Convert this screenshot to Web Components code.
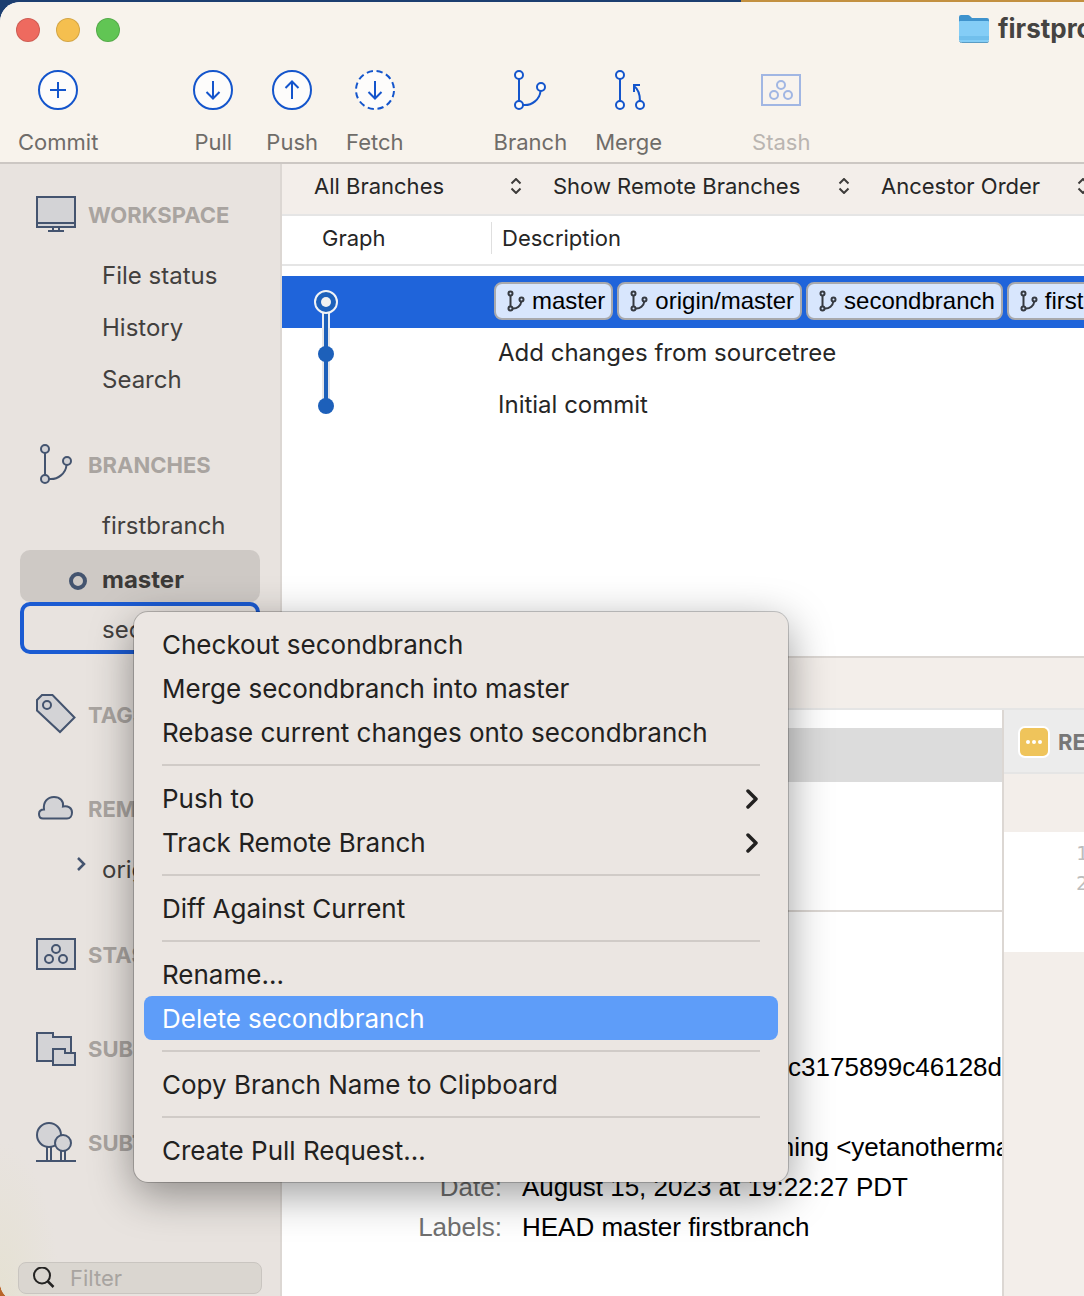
<!DOCTYPE html>
<html lang="en">
<head>
<meta charset="utf-8">
<meta name="viewport" content="width=device-width, initial-scale=1">
<title>firstproject</title>
<style>
  :root {
    --blue: #1455cc;
    --select: #1f64da;
    --slate: #44546f;
    --slate-fill: #d3d3d6;
    --bar: #f3eeea;
    --line: #dcd7d3;
    --line-soft: #e5e5e5;
    --ui: Inter, "Open Sans", sans-serif;
    --plain: "Liberation Sans", Arial, sans-serif;
  }
  html, body { height: 100%; }
  body {
    margin: 0;
    overflow: hidden;
    font-family: var(--ui);
    font-size: 22px;
    color: #262626;
    background:
      linear-gradient(to right, #1c3e70 0 68.4%, #c39040 68.4% 100%) top / 100% 40px no-repeat,
      #b9652a;
  }
</style>
</head>
<body>
<app-window></app-window>

<script>
const define = (name, html, setup) => {
  const template = document.createElement('template');
  template.innerHTML = '<style>*{box-sizing:border-box}:host{display:block;box-sizing:border-box}button,input,select{font:inherit;color:inherit;margin:0;border:0;background:none;padding:0}</style>' + html;
  customElements.define(name, class extends HTMLElement {
    constructor() {
      super();
      this.attachShadow({ mode: 'open' }).append(template.content.cloneNode(true));
    }
    connectedCallback() { if (setup) setup(this, this.shadowRoot); }
  });
};

/* ---------- icons ---------- */
const trio = '<rect x="1" y="5" width="38" height="30"/><circle cx="20" cy="15" r="4"/><circle cx="13" cy="25" r="4"/><circle cx="27" cy="25" r="4"/>';
const fork = '<path fill="none" d="M9 9V31M13 35C22 36 30 29 30.500 21"/><circle cx="9" cy="5" r="4"/><circle cx="9" cy="35" r="4"/><circle cx="31" cy="17" r="4"/>';
const ICONS = {
  commit: '<circle cx="20" cy="20" r="19"/><path d="M20 12V28M12 20H28"/>',
  pull: '<circle cx="20" cy="20" r="19"/><path fill="none" d="M20 11V28M13.500 22L20 28.500L26.500 22"/>',
  push: '<circle cx="20" cy="20" r="19"/><path fill="none" d="M20 29V12M13.500 18L20 11.500L26.500 18"/>',
  fetch: '<circle cx="20" cy="20" r="19" stroke-dasharray="6.200 3.750" stroke-dashoffset="-1"/><path fill="none" d="M20 11V28M13.500 22L20 28.500L26.500 22"/>',
  branch: fork,
  merge: '<path fill="none" d="M11 9V31M31 31C31 24 29 19 25 16M25 22V15H31"/><circle cx="11" cy="5" r="4"/><circle cx="11" cy="35" r="4"/><circle cx="31" cy="35" r="4"/>',
  stash: trio,
  monitor: '<rect x="1" y="3" width="38" height="30"/><path d="M1 29H39M17 34V36M23 34V36M12 37H28"/>',
  tag: '<path d="M1 6L6 1H16.500L38.500 23.500L24 38L1 16.500Z"/><circle cx="11" cy="11" r="4"/>',
  cloud: '<path d="M7 30.500H31C34 30.500 36 28 36 24.500C36 20 32 17.500 27 18.500C28 13 24 9 18 9C11.500 9 7 14 8 21.500C4.500 21.500 3 23.500 3 26C3 29 4.500 30.500 7 30.500Z"/>',
  modules: '<path d="M1 5H17V9H35V33H1Z"/><path d="M17 21H29V25H39V37H17Z"/>',
  trees: '<circle cx="13" cy="13" r="12"/><path d="M11 25V39M15 25V39"/><circle cx="27" cy="21" r="8"/><path d="M25 29V39M29 29V39M0 39H40"/>'
};
define('st-icon', `
<style>
  :host { width: 40px; height: 40px; flex: none; }
  svg { display: block; width: 100%; height: 100%; overflow: visible; stroke: var(--icon-stroke, #1455cc); fill: var(--icon-fill, #fdfcfb); stroke-width: var(--icon-width, 2); }
</style>
<svg viewBox="0 0 40 40" aria-hidden="true"></svg>`,
(host, root) => { root.querySelector('svg').innerHTML = ICONS[host.getAttribute('name')]; });

/* ---------- title bar ---------- */
define('traffic-lights', `
<style>
  :host { display: flex; gap: 16px; }
  button { width: 24px; height: 24px; border-radius: 50%; border: 1px solid #0002; }
  .close { background: #ee6a5f; } .min { background: #f5bf4f; } .zoom { background: #61c554; }
</style>
<button class="close" aria-label="Close"></button><button class="min" aria-label="Minimize"></button><button class="zoom" aria-label="Zoom"></button>`);

define('window-title', `
<style>
  :host { display: flex; align-items: center; gap: 8px; font-size: 26px; line-height: 32px; font-weight: 700; color: #454341; white-space: nowrap; }
  svg { flex: none; width: 32px; height: 32px; }
</style>
<svg viewBox="0 0 32 32" aria-hidden="true">
  <path d="M1 4q0-2 2-2h7q1 0 2 1l2 2h15q2 0 2 2v6H1z" fill="#3f93cd"/>
  <path d="M1 9q0-1 1-1h28q1 0 1 1v18q0 2-2 2H3q-2 0-2-2z" fill="#84cdf6"/>
  <path d="M1 24H31M1 26H31" stroke="#5fb2e2"/>
  <path d="M1.500 28.500Q2 29.500 3.500 29.500H29Q30.500 29.500 30.500 28.500" stroke="#5a9cc4" fill="none"/>
</svg>
<slot></slot>`);

/* ---------- tool bar ---------- */
define('tool-button', `
<style>
  button { display: flex; flex-direction: column; align-items: center; gap: 18px; min-width: 50px; line-height: 28px; color: #6f6c69; }
  :host([disabled]) button { color: #bab5b1; }
  :host([disabled]) { --icon-stroke: #a1b6e3; --icon-fill: #f8f3ee; }
</style>
<button type="button"><span class="icon"></span><slot></slot></button>`,
(host, root) => {
  root.querySelector('.icon').innerHTML = '<st-icon name="' + host.getAttribute('icon') + '"></st-icon>';
  root.querySelector('button').disabled = host.hasAttribute('disabled');
});

define('window-header', `
<style>
  :host { background: #f8f3ec; border-bottom: 2px solid #ccc7c3; }
  .title { display: flex; align-items: center; height: 56px; padding-left: 16px; overflow: hidden; }
  window-title { margin-left: 838px; padding-bottom: 2px; }
  .tools { display: flex; gap: 90px; padding: 12px 18px 6px; }
  .group { display: flex; gap: 28px; }
</style>
<div class="title"><traffic-lights></traffic-lights><window-title>firstproject</window-title></div>
<div class="tools" role="toolbar" aria-label="Repository actions">
  <tool-button icon="commit">Commit</tool-button>
  <div class="group">
    <tool-button icon="pull">Pull</tool-button>
    <tool-button icon="push">Push</tool-button>
    <tool-button icon="fetch">Fetch</tool-button>
  </div>
  <div class="group">
    <tool-button icon="branch">Branch</tool-button>
    <tool-button icon="merge">Merge</tool-button>
  </div>
  <tool-button icon="stash" disabled>Stash</tool-button>
</div>`);

/* ---------- side bar ---------- */
define('side-section', `
<style>
  :host { --icon-stroke: var(--slate); --icon-fill: var(--slate-fill); }
  h2 { display: flex; align-items: center; gap: 12px; height: 64px; margin: 0; padding: 0 0 2px 36px; font-size: 22px; font-weight: 700; color: #a9a4a0; white-space: nowrap; }
  .icon { margin-bottom: 2px; }
</style>
<h2><span class="icon"></span><slot name="title"></slot></h2>
<slot></slot>`,
(host, root) => { root.querySelector('.icon').innerHTML = '<st-icon name="' + host.getAttribute('icon') + '"></st-icon>'; });

define('side-item', `
<style>
  a { display: flex; align-items: center; height: 52px; margin: 0 20px; padding-top: 2px; border-radius: 10px; color: #42403e; font-size: 24px; text-decoration: none; white-space: nowrap; border: 4px solid transparent; }
  .mark { display: flex; justify-content: flex-end; width: 66px; margin-right: 12px; flex: none; }
  svg { display: none; }
  :host([current]) a { padding-top: 6px; background: #cec9c5; border-color: #cec9c5; font-weight: 700; color: #3c3a38; }
  :host([current]) .dot { display: block; }
  :host([target]) a { border-color: #1b5bd2; }
  :host([folded]) .fold { display: block; }
</style>
<a href="#"><span class="mark">
  <svg class="dot" width="24" height="24" viewBox="0 0 24 24"><circle cx="12" cy="14" r="7" fill="none" stroke="#44546f" stroke-width="4"/></svg>
  <svg class="fold" width="24" height="24" viewBox="0 0 24 24"><path d="M12 1L18 7L12 13" fill="none" stroke="#44546f" stroke-width="2.500"/></svg>
</span><slot></slot></a>`);

define('filter-box', `
<style>
  label { display: flex; align-items: center; height: 32px; padding: 0 14px; gap: 15px; border: 1px solid #c9c5c0; border-radius: 8px; background: #dad6d0; }
  svg { flex: none; }
  input { flex: 1; min-width: 0; height: 28px; outline: 0; }
  input::placeholder { color: #a8a4a0; opacity: 1; }
</style>
<label><svg width="22" height="22" viewBox="0 0 22 22" aria-hidden="true"><circle cx="9" cy="8.500" r="8" fill="none" stroke="#242322" stroke-width="2"/><path d="M14.500 14L20.500 20" stroke="#242322" stroke-width="2.500"/></svg>
<input type="search" placeholder="Filter" aria-label="Filter"></label>`);

define('side-bar', `
<style>
  :host { display: flex; flex-direction: column; gap: 30px; width: 282px; flex: none; padding-top: 20px; border-right: 2px solid var(--line); background: radial-gradient(ellipse 60px 160px at 0 100%, #e5e1d2, #e8e3df00), #e8e3df; }
  filter-box { margin: auto 18px 8px; }
</style>
<side-section icon="monitor"><span slot="title">WORKSPACE</span>
  <side-item>File status</side-item><side-item>History</side-item><side-item>Search</side-item></side-section>
<side-section icon="branch"><span slot="title">BRANCHES</span>
  <side-item>firstbranch</side-item><side-item current>master</side-item><side-item target>secondbranch</side-item></side-section>
<side-section icon="tag"><span slot="title">TAGS</span></side-section>
<side-section icon="cloud"><span slot="title">REMOTES</span><side-item folded>origin</side-item></side-section>
<side-section icon="stash"><span slot="title">STASHES</span></side-section>
<side-section icon="modules"><span slot="title">SUBMODULES</span></side-section>
<side-section icon="trees"><span slot="title">SUBTREES</span></side-section>
<filter-box></filter-box>`);

/* ---------- history ---------- */
define('pop-up', `
<style>
  label { display: grid; align-items: center; }
  select, svg { grid-area: 1 / 1; }
  select { appearance: none; width: 100%; line-height: 28px; cursor: default; }
  svg { justify-self: end; pointer-events: none; }
</style>
<label><select></select>
<svg width="12" height="16" viewBox="0 0 12 16" aria-hidden="true"><path d="M1.500 5.500L6 1L10.500 5.500M1.500 10.500L6 15L10.500 10.500" fill="none" stroke="#3d3b3a" stroke-width="2"/></svg></label>`,
(host, root) => {
  const select = root.querySelector('select');
  select.innerHTML = '<option>' + host.getAttribute('value') + '</option>';
  select.setAttribute('aria-label', host.getAttribute('label'));
});

define('filter-bar', `
<style>
  :host { display: flex; align-items: center; gap: 31px; height: 52px; padding: 0 0 6px 32px; overflow: hidden; background: var(--bar); border-bottom: 2px solid var(--line-soft); }
  pop-up { flex: none; width: 208px; }
  .wide { width: 297px; }
</style>
<pop-up label="Branches" value="All Branches"></pop-up>
<pop-up class="wide" label="Remotes" value="Show Remote Branches"></pop-up>
<pop-up label="Order" value="Ancestor Order"></pop-up>`);

define('branch-label', `
<style>
  :host { display: flex; align-items: center; gap: 8px; height: 38px; padding: 0 6px 0 10px; flex: none; border: 2px solid #a8a9ad; border-radius: 8px; background: #d8e6fd; color: #000; font: 24px/28px var(--plain); --icon-stroke: #363a41; --icon-fill: none; --icon-width: 4; }
  st-icon { width: 20px; height: 20px; margin-right: -2px; }
</style>
<st-icon name="branch"></st-icon><slot></slot>`);

define('commit-history', `
<style>
  :host { overflow: hidden; background: #fff; }
  table { width: 100%; table-layout: fixed; border-spacing: 0; }
  col.graph { width: 210px; }
  th { height: 50px; padding: 0; text-align: left; font-weight: 400; border-bottom: 2px solid var(--line-soft); }
  th span { display: block; line-height: 32px; padding-left: 40px; margin-bottom: 4px; }
  th:first-child span { border-right: 1px solid #dfdfdf; }
  th:last-child span { padding-left: 10px; }
  tbody::before { content: ""; display: block; height: 10px; }
  td { height: 52px; padding: 0; font-size: 24px; white-space: nowrap; overflow: hidden; }
  td svg { display: block; }
  td p { margin: 0; padding: 0 0 2px 6px; line-height: 32px; }
  .selected { background: var(--select); color: #fff; }
  .refs { display: flex; gap: 4px; padding: 0 0 2px 2px; }
</style>
<table>
  <colgroup><col class="graph"><col></colgroup>
  <thead><tr><th><span>Graph</span></th><th><span>Description</span></th></tr></thead>
  <tbody>
    <tr class="selected"><td><svg width="88" height="52" viewBox="0 0 88 52"><path d="M44 37V52" stroke="#e9ecf2" stroke-width="8"/><path d="M44 37V52" stroke="#1d60ba" stroke-width="4"/><circle cx="44" cy="26" r="11" fill="#1d60ba" stroke="#f1f3f6" stroke-width="2"/><circle cx="44" cy="26" r="5" fill="#f1f1f1"/></svg></td>
      <td><div class="refs"><branch-label>master</branch-label><branch-label>origin/master</branch-label><branch-label>secondbranch</branch-label><branch-label>firstbranch</branch-label></div></td></tr>
    <tr><td><svg width="88" height="52" viewBox="0 0 88 52"><path d="M44 0V52" stroke="#e6e6e8" stroke-width="8"/><path d="M44 0V52" stroke="#1d60ba" stroke-width="4"/><circle cx="44" cy="26" r="8" fill="#1d60ba"/></svg></td>
      <td><p>Add changes from sourcetree</p></td></tr>
    <tr><td><svg width="88" height="52" viewBox="0 0 88 52"><path d="M44 0V26" stroke="#e6e6e8" stroke-width="8"/><path d="M44 0V26" stroke="#1d60ba" stroke-width="4"/><circle cx="44" cy="26" r="8" fill="#1d60ba"/></svg></td>
      <td><p>Initial commit</p></td></tr>
  </tbody>
</table>`);

/* ---------- lower panes ---------- */
define('commit-details', `
<style>
  :host { flex: 1; overflow: hidden; background: #fff; padding-top: 135px; }
  dl { display: grid; grid-template-columns: 220px 1fr; column-gap: 20px; margin: 0; font: 26px/40px var(--plain); color: #000; white-space: nowrap; }
  dt { text-align: right; color: #707070; }
  dd { margin: 0; }
</style>
<dl>
  <dt>Commit:</dt><dd>5b0e9ad1874fc2306e9c3175899c46128d07be5a</dd>
  <dt>Parents:</dt><dd>4e81b02a9d</dd>
  <dt>Author:</dt><dd>Yet Another Math Learning &lt;yetanothermath@example.com&gt;</dd>
  <dt>Date:</dt><dd>August 15, 2023 at 19:22:27 PDT</dd>
  <dt>Labels:</dt><dd>HEAD master firstbranch</dd>
</dl>`);

define('file-list', `
<style>
  :host { height: 202px; flex: none; padding-top: 18px; background: #fff; border-bottom: 2px solid var(--line); }
  div { height: 54px; background: #dcdcdc; }
</style>
<div></div>`);

define('diff-view', `
<style>
  :host { min-width: 0; overflow: hidden; background: var(--bar); }
  header { display: flex; align-items: center; gap: 8px; height: 64px; padding: 2px 0 0 14px; background: #ececec; border-bottom: 2px solid var(--line-soft); font-weight: 700; color: #777; white-space: nowrap; }
  svg { flex: none; }
  ol { list-style: none; margin: 58px 0 0; height: 120px; padding: 6px 0 0 72px; background: #fff; font: 20px/30px "DejaVu Sans Mono", monospace; color: #bdbdbd; }
</style>
<header><svg width="32" height="32" viewBox="0 0 32 32" aria-hidden="true"><rect width="32" height="32" rx="7" fill="#fff"/><rect x="2" y="2" width="28" height="28" rx="5" fill="#efc45b"/><circle cx="10" cy="16" r="2" fill="#fff"/><circle cx="16" cy="16" r="2" fill="#fff"/><circle cx="22" cy="16" r="2" fill="#fff"/></svg><slot></slot></header>
<ol><li>1</li><li>2</li></ol>`);

define('lower-panes', `
<style>
  :host { display: flex; flex-direction: column; border-top: 2px solid var(--line); overflow: hidden; }
  .bar { height: 52px; flex: none; background: var(--bar); border-bottom: 2px solid var(--line-soft); }
  .split { flex: 1; min-height: 0; display: grid; grid-template-columns: 722px minmax(0, 1fr); }
  .left { display: flex; flex-direction: column; min-width: 0; border-right: 2px solid var(--line); }
</style>
<div class="bar"></div>
<div class="split"><div class="left"><file-list></file-list><commit-details></commit-details></div><diff-view>README.md</diff-view></div>`);

/* ---------- context menu ---------- */
define('menu-item', `
<style>
  button { display: flex; align-items: center; justify-content: space-between; width: 100%; height: 44px; padding: 2px 18px 0; border-radius: 8px; font-size: 26px; line-height: 32px; color: #222120; white-space: nowrap; text-align: left; }
  svg { display: none; }
  :host([submenu]) svg { display: block; }
  :host([active]) button { background: #5e9df9; color: #fff; }
</style>
<button type="button" role="menuitem"><span><slot></slot></span><svg width="16" height="20" viewBox="0 0 16 20" aria-hidden="true"><path d="M4 2L12 10L4 18" fill="none" stroke="#222120" stroke-width="3.500" stroke-linecap="round" stroke-linejoin="round"/></svg></button>`);

define('context-menu', `
<style>
  :host { width: 654px; padding: 10px; border-radius: 14px; background: #ebe6e2; box-shadow: 0 0 0 1px #0003, 0 12px 44px #0006; }
  hr { height: 2px; margin: 10px 18px; border: 0; background: #d0cbc7; }
</style>
<div role="menu">
<menu-item>Checkout secondbranch</menu-item>
<menu-item>Merge secondbranch into master</menu-item>
<menu-item>Rebase current changes onto secondbranch</menu-item>
<hr>
<menu-item submenu>Push to</menu-item>
<menu-item submenu>Track Remote Branch</menu-item>
<hr>
<menu-item>Diff Against Current</menu-item>
<hr>
<menu-item>Rename...</menu-item>
<menu-item active>Delete secondbranch</menu-item>
<hr>
<menu-item>Copy Branch Name to Clipboard</menu-item>
<hr>
<menu-item>Create Pull Request...</menu-item>
</div>`);

/* ---------- window ---------- */
define('app-window', `
<style>
  :host { padding-top: 2px; height: 100vh; }
  .window { display: flex; flex-direction: column; height: calc(100vh + 4px); border-radius: 20px 0 0 20px; overflow: hidden; background: #fff; }
  .body { flex: 1; display: flex; min-height: 0; }
  main { flex: 1; min-width: 0; display: flex; flex-direction: column; }
  filter-bar { flex: none; }
  commit-history { flex: 440 0 0; }
  lower-panes { flex: 644 0 0; }
  context-menu { position: absolute; left: 134px; top: 612px; }
</style>
<div class="window">
  <window-header></window-header>
  <div class="body">
    <side-bar></side-bar>
    <main><filter-bar></filter-bar><commit-history></commit-history><lower-panes></lower-panes></main>
  </div>
</div>
<context-menu></context-menu>`);
</script>
</body>
</html>
